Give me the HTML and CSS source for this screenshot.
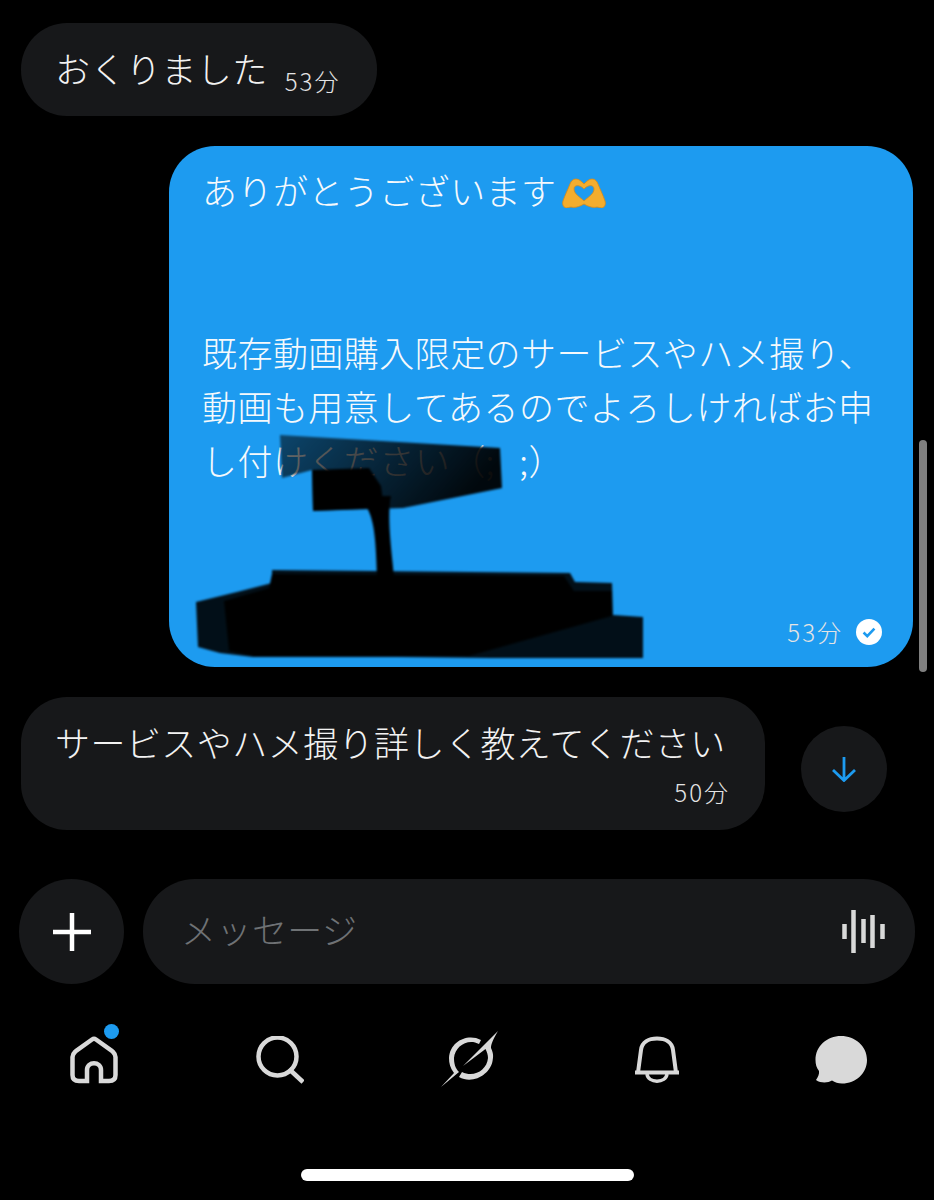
FILE: index.html
```html
<!DOCTYPE html>
<html lang="ja">

<head>
    <meta charset="UTF-8">
    <meta name="viewport" content="width=device-width, initial-scale=1.0">
    <title>メッセージ</title>
    <link rel="stylesheet" href="styles.css">
</head>

<body>
    <div id="thread">
        <div class="row">
            <div class="bubble received short">
                <span>おくりました</span>
                <span class="time">53分</span>
            </div>
        </div>

        <div class="row right">
            <div class="bubble sent">
                <p>ありがとうございます<svg class="emoji" viewBox="0 0 44 30">
                        <path fill="#f3ad2e" stroke="#dd8a12" stroke-width="0.8" fill-rule="evenodd"
                            d="M22 6 C19 3 17 1 14 1 C11 1 9 3 8 6 C6 11 3 17 1 23 C0 26 1 29 4 30 C6 30 7 29 9 29 C12 30 17 29 22 26 C27 29 32 30 35 29 C37 29 38 30 40 30 C43 29 44 26 43 23 C41 17 38 11 36 6 C35 3 33 1 30 1 C27 1 25 3 22 6 Z M22 23 C18 19 12 16 12 11 C12 7 17 6 22 11 C27 6 32 7 32 11 C32 16 26 19 22 23 Z" />
                    </svg></p>
                <p class="body">既存動画購入限定のサービスやハメ撮り、<br>動画も用意してあるのでよろしければお申<br>し付けください（;&nbsp;&nbsp;&nbsp;;）</p>
                <div class="meta">
                    <span class="time">53分</span>
                    <svg class="check" viewBox="0 0 24 24">
                        <circle cx="12" cy="12" r="12" fill="#fff" />
                        <path d="M7 12.5l3.4 3.4L17 8.8" fill="none" stroke="#1d9bf0" stroke-width="2.4" />
                    </svg>
                </div>
                <svg class="scribble" viewBox="0 0 744 521">
                    <defs>
                        <filter id="soft">
                            <feGaussianBlur stdDeviation="1.3" />
                        </filter>
                        <linearGradient id="fade" x1="0" x2="1" y1="0" y2="0.3">
                            <stop offset="0" stop-color="#000" stop-opacity="0.55" />
                            <stop offset="0.6" stop-color="#000" stop-opacity="0.8" />
                            <stop offset="1" stop-color="#000" stop-opacity="0.95" />
                        </linearGradient>
                    </defs>
                    <g filter="url(#soft)">
                        <path fill="url(#fade)"
                            d="M111 289 L331 302 L333 342 L234 362 L144 365 L143 324 L113 332 Z" />
                        <path fill="#000" d="M143 324 L200 322 L212 340 L215 362 L144 365 Z" />
                        <path fill="#000"
                            d="M205 350 L222 350 C218 370 222 400 225 430 L208 430 C207 400 206 375 198 362 Z" />
                        <path fill="#000" opacity="0.9"
                            d="M103 424 L401 427 L406 436 L443 437 L444 469 L474 471 L474 512 L321 512 L228 511 L84 511 L51 507 L29 501 L27 456 L68 446 L103 437 Z" />
                        <path fill="#000"
                            d="M103 428 L395 430 L405 445 L443 445 L443 470 L300 510 L85 510 L60 505 L55 455 L100 442 Z" />
                    </g>
                </svg>
            </div>
        </div>

        <div class="row with-button">
            <div class="bubble received wide">
                <div>サービスやハメ撮り詳しく教えてください</div>
                <div class="meta"><span class="time">50分</span></div>
            </div>
            <button class="scroll-down">
                <svg viewBox="0 0 26 26" width="26" height="26">
                    <path d="M13 1V24M2 14L13 24.5L24 14" fill="none" stroke="#1d9bf0" stroke-width="2.8" />
                </svg>
            </button>
        </div>
    </div>

    <div id="composer">
        <button class="plus">
            <svg viewBox="0 0 40 40" width="40" height="40">
                <path d="M20 1V39M1 20H39" stroke="#fff" stroke-width="4.5" />
            </svg>
        </button>
        <div class="input">
            <span>メッセージ</span>
            <svg viewBox="0 0 46 44" width="46" height="44">
                <path d="M2.5 14V29M11.5 0V43M21.5 9V33M30.5 5V38M40.5 14V29" stroke="#d9d9d9" stroke-width="4.5" />
            </svg>
        </div>
    </div>

    <nav id="tabs">
        <div class="tab">
            <svg viewBox="0 0 48 48" width="48" height="48">
                <path fill="none" stroke="#d9d9d9" stroke-width="4.5"
                    d="M2.5 21 C2.5 18 4 17 6 15 L22 3.5 C23.5 2.5 24.5 2.5 26 3.5 L42 15 C44 17 45.5 18 45.5 21 V39 C45.5 43 43 45 39 45 H31 V34 C31 25 17 25 17 34 V45 H9 C5 45 2.5 43 2.5 39 Z" />
            </svg>
            <span class="dot"></span>
        </div>
        <div class="tab search">
            <svg viewBox="0 0 48 48" width="48" height="48">
                <circle cx="21.5" cy="20.5" r="19" fill="none" stroke="#d9d9d9" stroke-width="4.5" />
                <path d="M33 33L47 46" stroke="#d9d9d9" stroke-width="4.5" />
            </svg>
        </div>
        <div class="tab">
            <svg viewBox="0 0 58 58" width="58" height="58">
                <path fill="#d9d9d9"
                    d="M40 9 C27 2 9 10 8 27 C8 32 9 37 13 42 L0 56 L18 41 C14 37 13 32 13 27 C14 15 27 7 38 13 Z" />
                <path fill="#d9d9d9"
                    d="M57 0 C51 10 50 14 50 17 C53 23 52 27 51.7 29 C50 43 32 54 18 46 L21 41 C33 47 46 39 47 27 C47 24 46 21 44.5 18 L22 35 Z" />
            </svg>
        </div>
        <div class="tab">
            <svg viewBox="0 0 44 48" width="44" height="48">
                <path fill="none" stroke="#d9d9d9" stroke-width="4"
                    d="M3 36.5 L6 14 C7 6 14 2.5 22 2.5 C30 2.5 37 6 38 14 L41 36.5 Z M0 36.5 H44" />
                <path fill="none" stroke="#d9d9d9" stroke-width="3.5" d="M12 38 C13 47.5 31 47.5 32 38" />
            </svg>
        </div>
        <div class="tab">
            <svg viewBox="0 0 52 48" width="52" height="48">
                <path fill="#d9d9d9"
                    d="M26 0 C40 0 52 10 52 24 C52 37 41 47.5 27 47.5 C23 47.5 20 46.5 17 44.5 C13 47 6 47.5 1 44 C3 41 4.5 38 4 35 C1.5 32 0.5 28 0.5 24 C0.5 10 12 0 26 0 Z" />
            </svg>
        </div>
    </nav>

    <div id="home-bar"></div>
    <div id="scrollbar"></div>
</body>

</html>
```

FILE: styles.css
```css
body {
    font-family: "Noto Sans CJK JP", "Noto Sans", sans-serif;
    font-weight: 300;
    margin: 0;
    padding: 0;
    background-color: #000;
    color: #f2f2f2;
    height: 1200px;
    position: relative;
    overflow: hidden;
    font-size: 35px;
    letter-spacing: 0.45px;
    display: flex;
    flex-direction: column;
}

p {
    margin: 0;
}

#thread {
    display: flex;
    flex-direction: column;
    gap: 30px;
    padding: 23px 21px 0 21px;
}

.row {
    display: flex;
}

.row.right {
    justify-content: flex-end;
}

.row.with-button {
    align-items: center;
    gap: 36px;
}

.bubble {
    box-sizing: border-box;
    border-radius: 46px;
}

.received {
    background-color: #17181a;
}

.short {
    width: 356px;
    height: 93px;
    padding: 0 34px 4px 34px;
    display: flex;
    align-items: center;
    gap: 17px;
    line-height: 1;
}

.short .time {
    margin-top: 26px;
}

.wide {
    width: 744px;
    height: 133px;
    padding: 19px 35px 0 34px;
    line-height: 52px;
}

.wide .meta {
    margin-top: 9px;
}

.sent {
    position: relative;
    width: 744px;
    height: 521px;
    padding: 17px 35px 0 33px;
    background-color: #1d9bf0;
    line-height: 54px;
    color: #f5f9fc;
}

.sent .body {
    margin-top: 108px;
    white-space: nowrap;
}

.emoji {
    width: 44px;
    height: 30px;
    margin-left: 5px;
    vertical-align: -3px;
}

.time {
    font-size: 24px;
    letter-spacing: 2px;
    color: #e4e4e4;
}

.meta {
    display: flex;
    justify-content: flex-end;
    align-items: center;
    line-height: 30px;
    gap: 13px;
}

.sent .meta {
    position: absolute;
    right: 31px;
    bottom: 20px;
}

.check {
    width: 26px;
    height: 26px;
}

.scribble {
    position: absolute;
    left: 0;
    top: 0;
    width: 744px;
    height: 521px;
}

.scroll-down {
    width: 86px;
    height: 86px;
    margin-top: 10px;
    border: none;
    border-radius: 50%;
    padding: 0;
    background-color: #17181a;
    display: flex;
    justify-content: center;
    align-items: center;
}

#composer {
    display: flex;
    gap: 19px;
    padding: 49px 19px 0 19px;
}

.plus {
    flex: none;
    width: 105px;
    height: 105px;
    border: none;
    border-radius: 50%;
    padding: 0;
    background-color: #17181a;
    display: flex;
    justify-content: center;
    align-items: center;
}

.input {
    flex-grow: 1;
    height: 105px;
    border-radius: 52px;
    background-color: #17181a;
    color: #6f7275;
    display: flex;
    align-items: center;
    justify-content: space-between;
    padding: 0 27px 0 38px;
    line-height: 1;
}

.input span {
    margin-top: -6px;
}

#tabs {
    display: flex;
    justify-content: space-between;
    align-items: center;
    padding: 47px 67px 0 70px;
}

.tab {
    position: relative;
    display: flex;
}

.search {
    margin-left: 2px;
}

.dot {
    position: absolute;
    top: -12px;
    right: -1px;
    width: 15px;
    height: 15px;
    border-radius: 50%;
    background-color: #1d9bf0;
}

#home-bar {
    position: absolute;
    left: 301px;
    top: 1169px;
    width: 333px;
    height: 12px;
    border-radius: 6px;
    background-color: #fff;
}

#scrollbar {
    position: absolute;
    left: 919px;
    top: 440px;
    width: 8px;
    height: 232px;
    border-radius: 4px;
    background-color: #808080;
}
```
